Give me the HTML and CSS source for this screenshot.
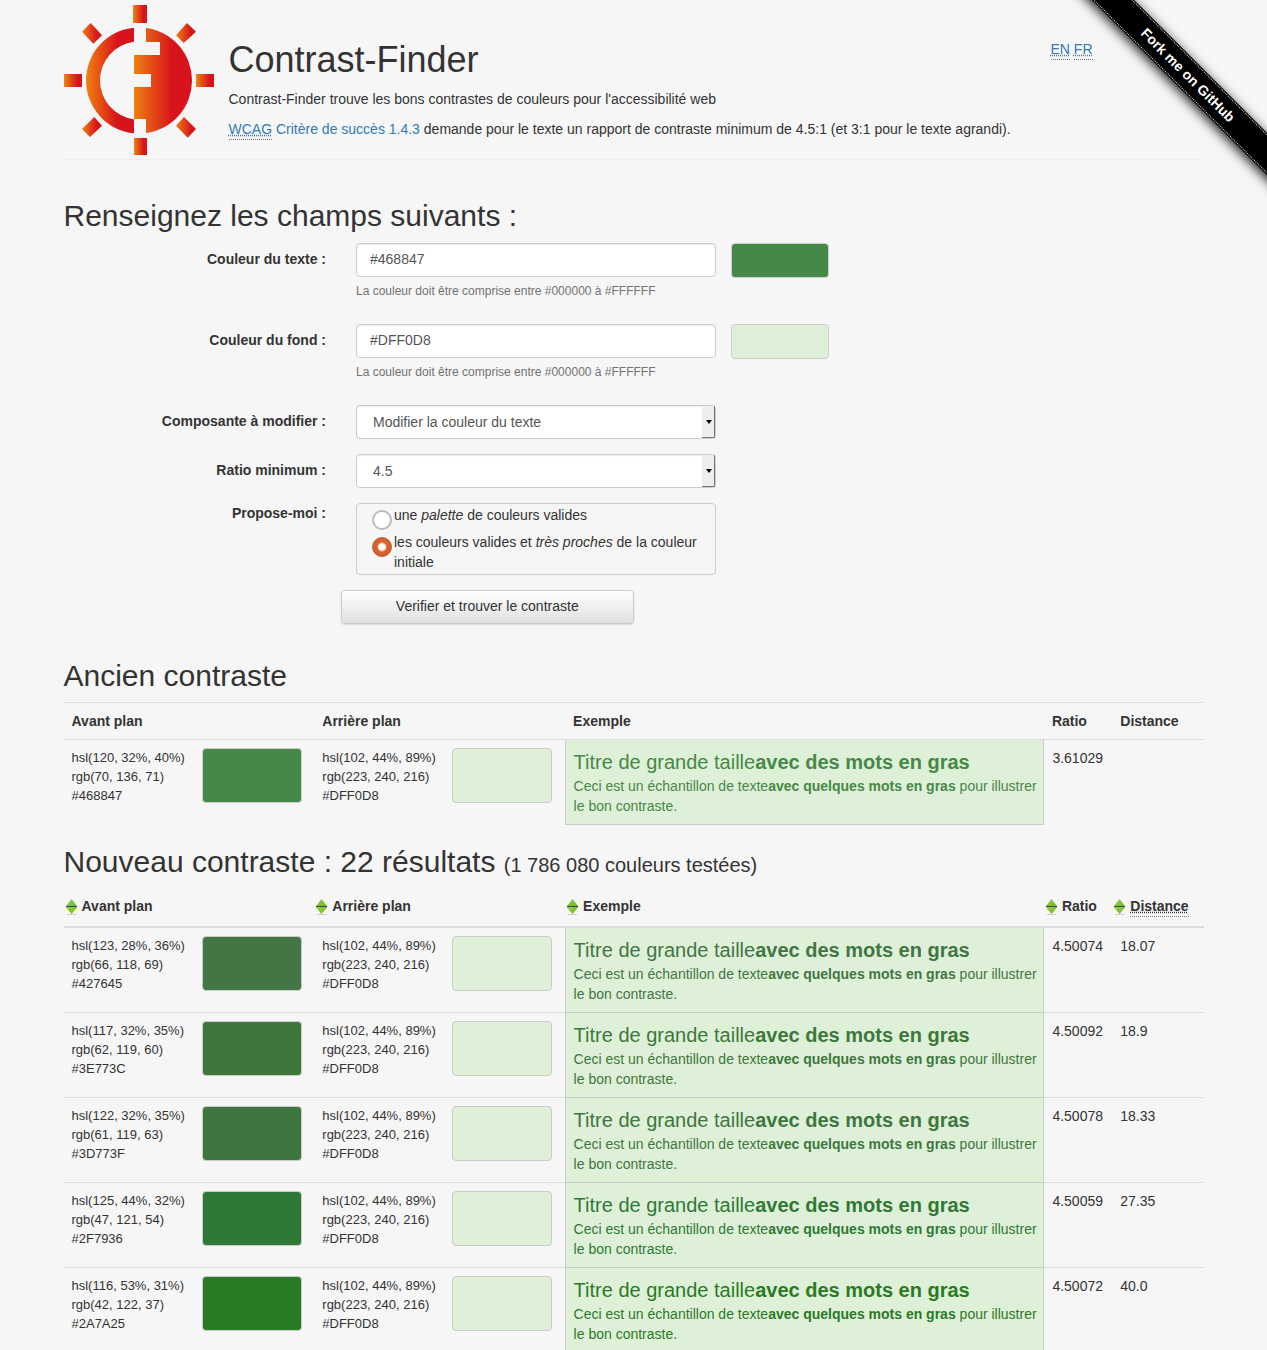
FILE: index.html
```html
<!DOCTYPE html>
<html lang="fr">
<head>
<meta charset="utf-8">
<meta name="viewport" content="width=device-width, initial-scale=1">
<title>Contrast-Finder</title>
<link rel="stylesheet" href="styles.css">
</head>
<body>
<svg class="defs" width="0" height="0" aria-hidden="true">
  <defs>
    <linearGradient id="sortFill" x1="0" x2="1" y1="0" y2="1"><stop offset="0" stop-color="#9bd152"/><stop offset="1" stop-color="#66b526"/></linearGradient>
    <symbol id="sort" viewBox="0 0 11 16">
      <path d="M5.500 0L11 7V8H0V7Z" fill="url(#sortFill)"/>
      <path d="M0 8H11V8.500L5.500 15L0 8.500Z" fill="url(#sortFill)"/>
      <path d="M0 7.500H11" stroke="#444" stroke-width="1"/>
      <path d="M1 15.500H10" stroke="#ccc" stroke-width="1"/>
    </symbol>
  </defs>
</svg>
<div class="ribbon-wrapper"><a class="ribbon" href="#github"><span>Fork me on GitHub</span></a></div>
<div class="container">
  <header class="page-header">
    <svg class="logo" viewBox="0 0 150 150" role="img" aria-label="Logo">
      <defs>
        <linearGradient id="ray"><stop offset="0" stop-color="#f08510"/><stop offset=".15" stop-color="#ea6a14"/><stop offset=".75" stop-color="#d7141b"/><stop offset="1" stop-color="#d7141b"/></linearGradient>
        <linearGradient id="disc"><stop offset="0" stop-color="#f08010"/><stop offset=".65" stop-color="#d7141b"/><stop offset="1" stop-color="#d7141b"/></linearGradient>
      </defs>
      <g fill="url(#ray)">
        <path d="M69 0H83V18H69Z"/><path d="M70 133H83V150H70Z"/>
        <path d="M0 69H18V82H0Z"/><path d="M132 69H150V82H132Z"/>
        <path d="M26.700 18L38 30.300L29.300 38.700L18 26.700Z"/>
        <path d="M123 18L132 26.700L119.700 38L112 30.300Z"/>
        <path d="M30.300 112L38 120.700L26 132L18 124Z"/>
        <path d="M120 112L132 124L123.700 132.700L112 120.700Z"/>
      </g>
      <g fill="url(#disc)">
        <path d="M70 22.740A53 53 0 0 0 70 128.260V114.180A39 39 0 0 1 70 36.820Z"/>
        <path d="M82 22.960A53 53 0 0 1 82 128.040V114H70V82H87V69H70V50H96V37H82Z"/>
      </g>
    </svg>
    <div class="intro">
      <h1>Contrast-Finder</h1>
      <p>Contrast-Finder trouve les bons contrastes de couleurs pour l'accessibilité web</p>
      <p><a href="#wcag"><abbr title="Web Content Accessibility Guidelines">WCAG</abbr> Critère de succès 1.4.3</a> demande pour le texte un rapport de contraste minimum de 4.5:1 (et 3:1 pour le texte agrandi).</p>
    </div>
    <nav class="languages"><a href="#en"><abbr title="English">EN</abbr></a> <a href="#fr"><abbr title="Français">FR</abbr></a></nav>
  </header>

  <h2 class="form-title">Renseignez les champs suivants :</h2>
  <form class="form">
    <div class="group color-group">
      <label for="foreground">Couleur du texte :</label>
      <div class="field"><input class="control" type="text" id="foreground" value="#468847"><span class="help">La couleur doit être comprise entre #000000 à #FFFFFF</span></div>
      <span class="swatch preview" style="--color:#468847"></span>
    </div>
    <div class="group color-group">
      <label for="background">Couleur du fond :</label>
      <div class="field"><input class="control" type="text" id="background" value="#DFF0D8"><span class="help">La couleur doit être comprise entre #000000 à #FFFFFF</span></div>
      <span class="swatch preview" style="--color:#DFF0D8"></span>
    </div>
    <div class="group">
      <label for="component">Composante à modifier :</label>
      <div class="field"><div class="select"><select class="control" id="component"><option>Modifier la couleur du texte</option></select></div></div>
    </div>
    <div class="group">
      <label for="ratio">Ratio minimum :</label>
      <div class="field"><div class="select"><select class="control" id="ratio"><option>4.5</option></select></div></div>
    </div>
    <div class="group">
      <span class="caption" id="algo">Propose-moi :</span>
      <div class="field">
        <div class="choices" role="radiogroup" aria-labelledby="algo">
          <label><input type="radio" name="algo"><span>une <em>palette</em> de couleurs valides</span></label>
          <label><input type="radio" name="algo" checked><span>les couleurs valides et <em>très proches</em> de la couleur initiale</span></label>
        </div>
      </div>
    </div>
    <div class="group"><button class="submit" type="button">Verifier et trouver le contraste</button></div>
  </form>

  <h2>Ancien contraste</h2>
  <table class="results old">
    <colgroup><col class="c-color"><col class="c-color"><col class="c-sample"><col class="c-ratio"><col class="c-distance"></colgroup>
    <thead><tr><th>Avant plan</th><th>Arrière plan</th><th>Exemple</th><th>Ratio</th><th>Distance</th></tr></thead>
    <tbody>
      <tr>
        <td><div class="color"><span>hsl(120, 32%, 40%)<br>rgb(70, 136, 71)<br>#468847</span><span class="swatch" style="--color:#468847"></span></div></td>
        <td><div class="color"><span>hsl(102, 44%, 89%)<br>rgb(223, 240, 216)<br>#DFF0D8</span><span class="swatch" style="--color:#DFF0D8"></span></div></td>
        <td class="sample" style="--color:#468847"><p class="large">Titre de grande taille<strong>avec des mots en gras</strong></p><p>Ceci est un échantillon de texte<strong>avec quelques mots en gras</strong> pour illustrer le bon contraste.</p></td>
        <td>3.61029</td><td></td>
      </tr>
    </tbody>
  </table>

  <h2>Nouveau contraste : 22 résultats <small>(1 786 080 couleurs testées)</small></h2>
  <table class="results new">
    <colgroup><col class="c-color"><col class="c-color"><col class="c-sample"><col class="c-ratio"><col class="c-distance"></colgroup>
    <thead><tr>
      <th><svg class="sort"><use href="#sort"/></svg>Avant plan</th>
      <th><svg class="sort"><use href="#sort"/></svg>Arrière plan</th>
      <th><svg class="sort"><use href="#sort"/></svg>Exemple</th>
      <th><svg class="sort"><use href="#sort"/></svg>Ratio</th>
      <th><svg class="sort"><use href="#sort"/></svg><abbr title="Distance entre les couleurs">Distance</abbr></th>
    </tr></thead>
    <tbody>
      <tr>
        <td><div class="color"><span>hsl(123, 28%, 36%)<br>rgb(66, 118, 69)<br>#427645</span><span class="swatch" style="--color:#427645"></span></div></td>
        <td><div class="color"><span>hsl(102, 44%, 89%)<br>rgb(223, 240, 216)<br>#DFF0D8</span><span class="swatch" style="--color:#DFF0D8"></span></div></td>
        <td class="sample" style="--color:#427645"><p class="large">Titre de grande taille<strong>avec des mots en gras</strong></p><p>Ceci est un échantillon de texte<strong>avec quelques mots en gras</strong> pour illustrer le bon contraste.</p></td>
        <td>4.50074</td><td>18.07</td>
      </tr>
      <tr>
        <td><div class="color"><span>hsl(117, 32%, 35%)<br>rgb(62, 119, 60)<br>#3E773C</span><span class="swatch" style="--color:#3E773C"></span></div></td>
        <td><div class="color"><span>hsl(102, 44%, 89%)<br>rgb(223, 240, 216)<br>#DFF0D8</span><span class="swatch" style="--color:#DFF0D8"></span></div></td>
        <td class="sample" style="--color:#3E773C"><p class="large">Titre de grande taille<strong>avec des mots en gras</strong></p><p>Ceci est un échantillon de texte<strong>avec quelques mots en gras</strong> pour illustrer le bon contraste.</p></td>
        <td>4.50092</td><td>18.9</td>
      </tr>
      <tr>
        <td><div class="color"><span>hsl(122, 32%, 35%)<br>rgb(61, 119, 63)<br>#3D773F</span><span class="swatch" style="--color:#3D773F"></span></div></td>
        <td><div class="color"><span>hsl(102, 44%, 89%)<br>rgb(223, 240, 216)<br>#DFF0D8</span><span class="swatch" style="--color:#DFF0D8"></span></div></td>
        <td class="sample" style="--color:#3D773F"><p class="large">Titre de grande taille<strong>avec des mots en gras</strong></p><p>Ceci est un échantillon de texte<strong>avec quelques mots en gras</strong> pour illustrer le bon contraste.</p></td>
        <td>4.50078</td><td>18.33</td>
      </tr>
      <tr>
        <td><div class="color"><span>hsl(125, 44%, 32%)<br>rgb(47, 121, 54)<br>#2F7936</span><span class="swatch" style="--color:#2F7936"></span></div></td>
        <td><div class="color"><span>hsl(102, 44%, 89%)<br>rgb(223, 240, 216)<br>#DFF0D8</span><span class="swatch" style="--color:#DFF0D8"></span></div></td>
        <td class="sample" style="--color:#2F7936"><p class="large">Titre de grande taille<strong>avec des mots en gras</strong></p><p>Ceci est un échantillon de texte<strong>avec quelques mots en gras</strong> pour illustrer le bon contraste.</p></td>
        <td>4.50059</td><td>27.35</td>
      </tr>
      <tr>
        <td><div class="color"><span>hsl(116, 53%, 31%)<br>rgb(42, 122, 37)<br>#2A7A25</span><span class="swatch" style="--color:#2A7A25"></span></div></td>
        <td><div class="color"><span>hsl(102, 44%, 89%)<br>rgb(223, 240, 216)<br>#DFF0D8</span><span class="swatch" style="--color:#DFF0D8"></span></div></td>
        <td class="sample" style="--color:#2A7A25"><p class="large">Titre de grande taille<strong>avec des mots en gras</strong></p><p>Ceci est un échantillon de texte<strong>avec quelques mots en gras</strong> pour illustrer le bon contraste.</p></td>
        <td>4.50072</td><td>40.0</td>
      </tr>
    </tbody>
  </table>
</div>
</body>
</html>
```
FILE: styles.css
```css
*, *::before, *::after { box-sizing: border-box; }

body {
  margin: 0;
  position: relative;
  background: #f6f6f6;
  color: #333;
  font: 14px/20px "Liberation Sans", Arial, sans-serif;
}
.defs { position: absolute; }
p { margin: 0; }
a { color: #337ab7; text-decoration: none; }
abbr {
  text-decoration: underline dotted;
  border-bottom: 1px dotted #777;
  padding-bottom: 2px;
  cursor: help;
}
.container { max-width: 1170px; margin: 0 auto; padding: 0 15px; }

/* Header */
.page-header {
  display: flex;
  gap: 15px;
  padding: 5px 0 4px;
  border-bottom: 1px solid #eee;
}
.logo { flex: none; width: 150px; height: 150px; }
.intro { flex: 1; padding-top: 35px; }
h1 { margin: 0 0 9px; font-size: 36px; line-height: 40px; font-weight: 400; }
.intro p { margin-bottom: 10px; }
.intro p:last-child { margin-bottom: 0; }
.languages { flex: none; width: 153px; padding-top: 34px; }

/* Corner ribbon */
.ribbon-wrapper {
  position: absolute;
  top: 0;
  right: 0;
  width: 220px;
  height: 220px;
  overflow: hidden;
  pointer-events: none;
}
.ribbon {
  position: absolute;
  top: 60px;
  right: -71px;
  width: 300px;
  padding: 1px 0;
  background: #000;
  box-shadow: 0 3px 12px rgba(0, 0, 0, .9);
  color: #fff;
  font-size: 14px;
  font-weight: 700;
  text-align: center;
  transform: rotate(45deg);
  pointer-events: auto;
}
.ribbon span {
  display: block;
  border: 1px dotted #ddd;
  border-width: 1px 0;
  line-height: 26px;
}

/* Form */
h2 { margin: 0; font-size: 30px; line-height: 34px; font-weight: 400; }
h2 small { font-size: 20px; }
.form-title { margin: 39px 0 10px; }
.form { margin: 0 -15px 35px; }
.group {
  display: grid;
  grid-template-columns: repeat(12, 1fr);
  align-items: start;
  margin-bottom: 15px;
}
.color-group { margin-bottom: 23px; }
.group > label, .caption {
  grid-column: 1 / 4;
  padding: 6px 15px 0;
  font-weight: 700;
  text-align: right;
}
.group > .caption { padding-top: 0; }
.field { grid-column: 4 / 8; padding: 0 15px; }
.control {
  display: block;
  width: 100%;
  height: 34px;
  padding: 0 13px 2px;
  border: 1px solid #ccc;
  border-radius: 4px;
  background: #fff;
  box-shadow: inset 0 1px 1px rgba(0, 0, 0, .08);
  color: #555;
  font: inherit;
}
.help { display: block; margin-top: 4px; color: #737373; font-size: 12px; }
.swatch {
  display: block;
  border: 1px solid #ccc;
  border-radius: 4px;
  background: var(--color);
}
.preview { height: 35px; }
.select { position: relative; }
.select .control { appearance: none; padding: 0 16px; }
.select::before {
  content: "";
  position: absolute;
  top: 1px;
  right: 1px;
  bottom: 1px;
  width: 13px;
  border: solid #777;
  border-width: 0 1px 1px 0;
  background: #eee;
  pointer-events: none;
}
.select::after {
  content: "";
  position: absolute;
  top: 15px;
  right: 4px;
  border: solid transparent;
  border-width: 4px 3px 0;
  border-top-color: #000;
  pointer-events: none;
}
.choices {
  display: grid;
  gap: 2px;
  padding: 1px 15px 2px;
  border: 1px solid #ccc;
  border-radius: 4px;
}
.choices label { display: flex; align-items: flex-start; gap: 2px; }
.choices input {
  appearance: none;
  flex: none;
  width: 20px;
  height: 20px;
  margin: 5px 0 0;
  border: 2px solid #bbb;
  border-radius: 50%;
  background: #fff;
}
.choices input:checked {
  border: 1px solid #b9683c;
  background: radial-gradient(circle, #fff 3px, #d9622b 5px, #d9622b 7px, #c75a28 9px);
}
.submit {
  grid-column: 4 / 7;
  height: 34px;
  padding-bottom: 3px;
  border: 1px solid #ccc;
  border-radius: 4px;
  background: linear-gradient(#fff, #e0e0e0);
  box-shadow: 0 1px 2px rgba(0, 0, 0, .12);
  color: #333;
  font: inherit;
}

/* Result tables */
.results {
  width: 100%;
  table-layout: fixed;
  border-collapse: collapse;
}
.c-color { width: 22%; }
.c-sample { width: 42%; }
.c-ratio { width: 6%; }
.c-distance { width: 8%; }
.results th, .results td {
  padding: 8px;
  border-top: 1px solid #ddd;
  text-align: left;
  vertical-align: top;
}
.old { margin: 9px 0 20px; }
.new { margin-top: 5px; }
.new th {
  padding: 9px 2px 10px;
  border-top: 0;
  border-bottom: 2px solid #ddd;
}
.sort { width: 11px; height: 16px; margin-right: 5px; vertical-align: middle; }
.color { display: flex; font-size: 13px; line-height: 19px; }
.color span:first-child { min-width: 130px; }
.color .swatch { width: 100px; height: 55px; }
.results .sample {
  padding-right: 4px;
  border-right: 1px solid #ccc;
  border-bottom: 1px solid #ccc;
  border-left: 1px solid #ccc;
  background: #dff0d8;
  color: var(--color);
}
.sample .large { font-size: 20px; line-height: 28px; }
```
